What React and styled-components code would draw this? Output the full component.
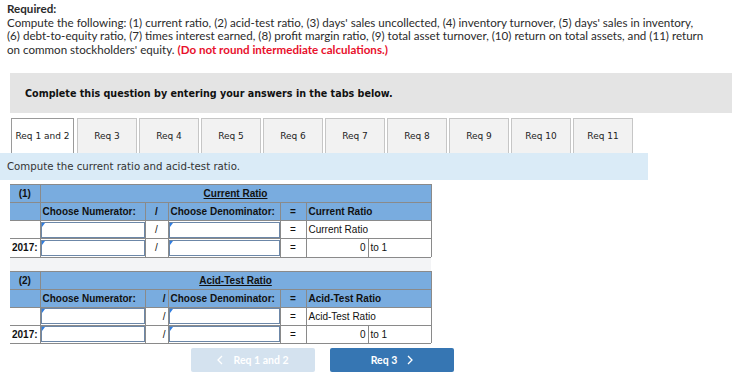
import React from 'react'
import styled, { createGlobalStyle } from 'styled-components'

const Global = createGlobalStyle`
  body {
    margin: 0;
    background: #fff;
    font-family: Lato, 'Liberation Sans', sans-serif;
    color: #222;
  }
`

const Page = styled.div`
  width: 751px;
  height: 386px;
  overflow: hidden;
`

const Required = styled.div`
  padding: 2px 7px 0;
  font-family: Lato, 'Open Sans', sans-serif;
  font-size: 11.6px;
  line-height: 13.5px;
  color: #2b2b2b;
  white-space: nowrap;
`
const Strong = styled.div`
  font-weight: 700;
`
const Warn = styled.span`
  color: #e8102c;
  font-weight: 700;
`

const Instruction = styled.div`
  margin: 17px 19px 0 10px;
  height: 40px;
  background: #e4e4e4;
  display: flex;
  align-items: center;
  padding-left: 15px;
  font-family: 'DejaVu Sans', Verdana, sans-serif;
  font-size: 9.6px;
  font-weight: 700;
  color: #111;
`

const Tabs = styled.div`
  display: flex;
  gap: 2px;
  margin: 5px 0 0 11px;
`
const Tab = styled.div`
  width: ${(p) => (p.active ? '61px' : '58px')};
  height: 34px;
  display: flex;
  align-items: center;
  justify-content: center;
  background: ${(p) => (p.active ? '#fff' : '#f2f2f2')};
  border: 1px solid ${(p) => (p.active ? '#9a9a9a' : '#c6c6c6')};
  border-bottom: none;
  font-family: 'DejaVu Sans', Verdana, sans-serif;
  font-size: 9px;
  color: #222;
  margin-right: ${(p) => (p.active ? '1px' : '0')};
`

const Band = styled.div`
  width: 648px;
  height: 27px;
  background: #daebf7;
  display: flex;
  align-items: center;
  padding-left: 7px;
  box-sizing: border-box;
  font-family: 'DejaVu Sans', Verdana, sans-serif;
  font-size: 10.2px;
  color: #333;
`

const Tables = styled.div`
  margin: 4px 0 0 10px;
  width: 421px;
`

const Grid = styled.table`
  border-collapse: collapse;
  table-layout: fixed;
  width: 421px;
  font-family: 'Liberation Sans', Arial, sans-serif;
  font-size: 10px;
  color: #111;
`
const Row = styled.tr`
  height: 18px;
  background: ${(p) => (p.head ? '#79acdf' : '#fff')};
`
const Cell = styled.td`
  padding: 0 ${(p) => (p.pad ? '2px' : '0')};
  border-top: 1px solid #8a8a8a;
  border-left: ${(p) => (p.first ? 'none' : '1px solid #8a8a8a')};
  border-right: ${(p) => (p.last ? '1px solid #8a8a8a' : 'none')};
  text-align: ${(p) => p.align || 'left'};
  font-weight: ${(p) => (p.bold ? 700 : 400)};
  text-decoration: ${(p) => (p.under ? 'underline' : 'none')};
  white-space: nowrap;
  overflow: hidden;
  vertical-align: middle;
`
const InputBox = styled.div`
  position: relative;
  height: 16px;
  box-sizing: border-box;
  border: 1px solid #6c87a8;
  background: #fff;

  &:before {
    content: '';
    position: absolute;
    top: 0;
    left: 0;
    border-top: 4px solid #2f7de1;
    border-right: 3px solid transparent;
  }
`
const Spacer = styled.div`
  height: 13px;
  background: #f3f4f6;
  border-top: 1px solid #8a8a8a;
`
const Bottom = styled.div`
  border-top: 1px solid #8a8a8a;
`

const Nav = styled.div`
  display: flex;
  gap: 15px;
  margin: 4px 0 0 191px;
`
const NavButton = styled.div`
  width: 124px;
  height: 24px;
  border-radius: 2px;
  background: ${(p) => (p.disabled ? '#d4e2ef' : '#3676b3')};
  color: #fff;
  display: flex;
  align-items: center;
  justify-content: center;
  gap: 10px;
  font-family: Lato, 'Liberation Sans', sans-serif;
  font-size: 10.5px;
  font-weight: 700;
`

const Chevron = ({ dir }) => (
  <svg width='6' height='10' viewBox='0 0 6 10'>
    <polyline
      points={dir === 'left' ? '5,1 1,5 5,9' : '1,1 5,5 1,9'}
      fill='none'
      stroke='#fff'
      strokeWidth='1.3'
    />
  </svg>
)

const tabs = [
  'Req 1 and 2',
  'Req 3',
  'Req 4',
  'Req 5',
  'Req 6',
  'Req 7',
  'Req 8',
  'Req 9',
  'Req 10',
  'Req 11',
]

function RatioTable({ num, title, slashAlign }) {
  return (
    <Grid>
      <colgroup>
        <col style={{ width: 30 }} />
        <col style={{ width: 105 }} />
        <col style={{ width: 23 }} />
        <col style={{ width: 112 }} />
        <col style={{ width: 26 }} />
        <col style={{ width: 62 }} />
        <col style={{ width: 63 }} />
      </colgroup>
      <tbody>
        <Row head>
          <Cell first bold align='center'>
            ({num})
          </Cell>
          <Cell colSpan={6} last bold under align='center'>
            {title}
          </Cell>
        </Row>
        <Row head>
          <Cell first />
          <Cell bold pad>
            Choose Numerator:
          </Cell>
          <Cell bold align={slashAlign} pad>
            /
          </Cell>
          <Cell bold pad>
            Choose Denominator:
          </Cell>
          <Cell bold align='center'>
            =
          </Cell>
          <Cell colSpan={2} last bold pad>
            {title}
          </Cell>
        </Row>
        <Row>
          <Cell first />
          <Cell>
            <InputBox />
          </Cell>
          <Cell align={slashAlign} pad>
            /
          </Cell>
          <Cell>
            <InputBox />
          </Cell>
          <Cell align='center'>=</Cell>
          <Cell colSpan={2} last pad>
            {title}
          </Cell>
        </Row>
        <Row>
          <Cell first bold align='right' pad>
            2017:
          </Cell>
          <Cell>
            <InputBox />
          </Cell>
          <Cell align={slashAlign} pad>
            /
          </Cell>
          <Cell>
            <InputBox />
          </Cell>
          <Cell align='center'>=</Cell>
          <Cell align='right' pad>
            0
          </Cell>
          <Cell last pad>
            to 1
          </Cell>
        </Row>
      </tbody>
    </Grid>
  )
}

export default function App() {
  return (
    <Page>
      <Global />
      <Required>
        <Strong>Required:</Strong>
        Compute the following: (1) current ratio, (2) acid-test ratio, (3)
        days' sales uncollected, (4) inventory turnover, (5) days' sales in
        inventory,
        <br />
        (6) debt-to-equity ratio, (7) times interest earned, (8) profit margin
        ratio, (9) total asset turnover, (10) return on total assets, and (11)
        return
        <br />
        on common stockholders' equity.{' '}
        <Warn>(Do not round intermediate calculations.)</Warn>
      </Required>
      <Instruction>
        Complete this question by entering your answers in the tabs below.
      </Instruction>
      <Tabs>
        {tabs.map((t, i) => (
          <Tab key={t} active={i === 0}>
            {t}
          </Tab>
        ))}
      </Tabs>
      <Band>Compute the current ratio and acid-test ratio.</Band>
      <Tables>
        <RatioTable num={1} title='Current Ratio' slashAlign='center' />
        <Spacer />
        <RatioTable num={2} title='Acid-Test Ratio' slashAlign='right' />
        <Bottom />
      </Tables>
      <Nav>
        <NavButton disabled>
          <Chevron dir='left' />
          Req 1 and 2
        </NavButton>
        <NavButton>
          Req 3
          <Chevron dir='right' />
        </NavButton>
      </Nav>
    </Page>
  )
}
